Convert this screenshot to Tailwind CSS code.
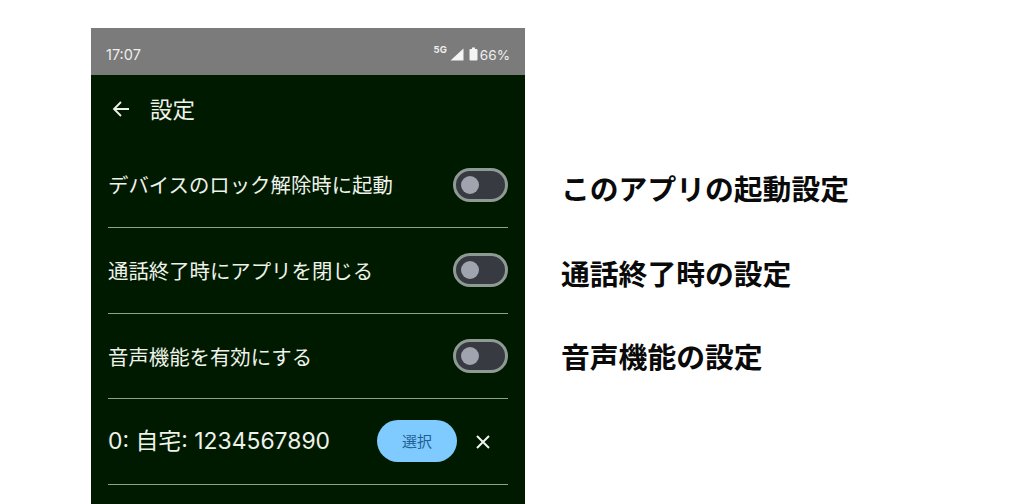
<!doctype html>
<html lang="ja">
<head>
<meta charset="utf-8">
<script src="https://cdn.jsdelivr.net/npm/@tailwindcss/browser@4"></script>
</head>
<body class="w-[1024px] h-[504px] overflow-hidden bg-white font-['Noto_Sans_CJK_JP','Noto_Sans',sans-serif]">
  <div class="flex h-full pt-[28px] pl-[91px]">
    <!-- phone -->
    <div class="w-[434px] h-[476px] flex flex-col bg-[#001a00] text-[#eef2ea] overflow-hidden">
      <div class="h-[47px] shrink-0 flex items-center justify-between bg-[#7a7b7a] pt-[7px] pl-[15px] pr-[15px] text-[#eeeeee] font-['Inter',sans-serif] text-[14.5px]">
        <span>17:07</span>
        <div class="flex items-center">
          <span class="text-[9.5px] font-bold mb-[9px] mr-[3px]">5G</span>
          <svg class="w-[14px] h-[13px] mr-[5px] mb-[2px]" viewBox="0 0 14 13"><path d="M13.5 0.5V12.5H0.5Z" fill="#f4f4f4"/></svg>
          <svg class="w-[9px] h-[14px] mr-[2px] mb-[2px]" viewBox="0 0 9 14"><path d="M3 0.5h3v1.5h1.5a1 1 0 0 1 1 1v9.5a1 1 0 0 1-1 1h-6a1 1 0 0 1-1-1V3a1 1 0 0 1 1-1H3Z" fill="#f4f4f4"/></svg>
          <span class="text-[13.6px]">66%</span>
        </div>
      </div>

      <div class="h-[70px] shrink-0 flex items-center pl-[21px] pb-[3px]">
        <svg class="w-[18px] h-[18px]" viewBox="0 0 18 18" fill="none" stroke="#eef2ea" stroke-width="1.8"><path d="M17 9H2M9 2L2 9l7 7"/></svg>
        <span class="ml-[20px] text-[22.5px]">設定</span>
      </div>

      <div class="ml-[17px] w-[400px] flex flex-col">
        <div class="h-[83px] flex items-center justify-between border-b border-[#8fa18c]">
          <span class="text-[20.4px] mb-[3px]">デバイスのロック解除時に起動</span>
          <div class="w-[55px] h-[34px] mb-[3px] rounded-full bg-[#383a42] border-[3px] border-[#8e9a94] flex items-center pl-[5px]"><div class="w-[18px] h-[18px] rounded-full bg-[#a0a4ae]"></div></div>
        </div>
        <div class="h-[86px] flex items-center justify-between border-b border-[#8fa18c]">
          <span class="text-[20.4px]">通話終了時にアプリを閉じる</span>
          <div class="w-[55px] h-[34px] mb-[1px] rounded-full bg-[#383a42] border-[3px] border-[#8e9a94] flex items-center pl-[5px]"><div class="w-[18px] h-[18px] rounded-full bg-[#a0a4ae]"></div></div>
        </div>
        <div class="h-[85px] flex items-center justify-between border-b border-[#8fa18c]">
          <span class="text-[20.4px]">音声機能を有効にする</span>
          <div class="w-[55px] h-[34px] rounded-full bg-[#383a42] border-[3px] border-[#8e9a94] flex items-center pl-[5px]"><div class="w-[18px] h-[18px] rounded-full bg-[#a0a4ae]"></div></div>
        </div>
        <div class="h-[86px] flex items-center border-b border-[#8fa18c]">
          <span class="text-[22.9px] w-[269px] shrink-0 whitespace-nowrap font-['Inter','Noto_Sans_CJK_JP',sans-serif]">0: 自宅: 1234567890</span>
          <button class="w-[80px] h-[42px] mb-[2px] rounded-full bg-[#7fcbff] text-[#1f5f92] text-[15px]"><span class="relative top-[1px]">選択</span></button>
          <svg class="w-[16px] h-[16px] ml-[18px]" viewBox="0 0 16 16" fill="none" stroke="#f2f5ee" stroke-width="2"><path d="M2 2l12 12M14 2L2 14"/></svg>
        </div>
      </div>
    </div>

    <!-- captions -->
    <div class="ml-[36px] flex flex-col pt-[141px] text-[28.8px] font-bold text-[#0a0a0a] leading-[38px] whitespace-nowrap">
      <p>このアプリの起動設定</p>
      <p class="mt-[47px]">通話終了時の設定</p>
      <p class="mt-[45px]">音声機能の設定</p>
    </div>
  </div>
</body>
</html>
